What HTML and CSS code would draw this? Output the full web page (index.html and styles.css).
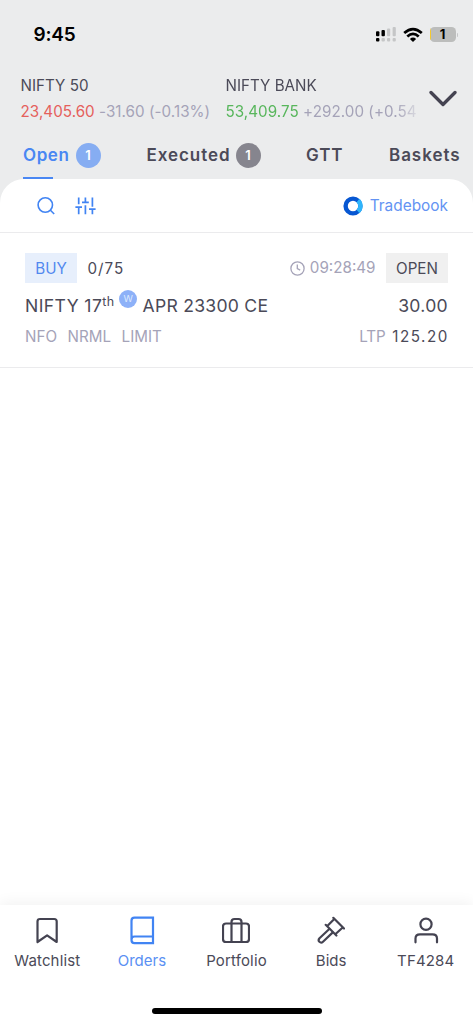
FILE: index.html
```html
<!DOCTYPE html>
<html lang="en">
<head>
<meta charset="utf-8">
<title>Orders</title>
<link rel="stylesheet" href="styles.css">
</head>
<body>
<div class="app">
  <header class="status">
    <span class="time">9:45</span>
    <div class="indicators">
      <svg class="signal" width="22" height="16" viewBox="0 0 22 16">
        <g fill="#000"><rect x="1" y="4.3" width="3.4" height="5" rx="1"/><rect x="6.5" y="3" width="3.4" height="6.3" rx="1"/><rect x="1" y="11" width="3.4" height="3.6" rx="1"/></g>
        <g fill="#c5c6c7"><rect x="12" y="1.5" width="3.2" height="7.8" rx="1"/><rect x="17.6" y="0" width="3.2" height="9.3" rx="1"/><rect x="6.5" y="11" width="3.4" height="3.4" rx="1"/><rect x="12" y="11" width="3.2" height="3.4" rx="1"/><rect x="17.6" y="11" width="3.2" height="3.4" rx="1"/></g>
      </svg>
      <svg class="wifi" width="20" height="16" viewBox="0 0 20 16">
        <g fill="none" stroke="#000" stroke-width="2.7"><path d="M1.200 6Q10-1.800 18.800 6"/><path d="M4.300 9.600Q10 4.300 15.700 9.600"/></g>
        <path d="M6.900 12Q10 9.200 13.100 12L10 15Z"/>
      </svg>
      <div class="battery"><span class="charge"></span>1</div>
      <span class="battery-cap"></span>
    </div>
  </header>

  <section class="tickers">
    <div class="ticker">
      <div class="index-name">NIFTY 50</div>
      <div class="quote"><span class="down">23,405.60</span> <span class="change">-31.60 (-0.13%)</span></div>
    </div>
    <div class="ticker ticker-clipped">
      <div class="index-name">NIFTY BANK</div>
      <div class="quote"><span class="up">53,409.75</span> <span class="change">+292.00 (+0.54</span></div>
    </div>
    <svg class="chevron" width="28" height="18" viewBox="0 0 28 18"><path d="M2 2.5 14 14.5 26 2.5" fill="none" stroke="#444351" stroke-width="3.3" stroke-linecap="round" stroke-linejoin="round"/></svg>
  </section>

  <nav class="tabs">
    <div class="tab tab-active"><span>Open</span><span class="count count-blue">1</span></div>
    <div class="tab tab-executed"><span>Executed</span><span class="count">1</span></div>
    <div class="tab tab-gtt">GTT</div>
    <div class="tab">Baskets</div>
  </nav>

  <main class="sheet">
    <div class="toolbar">
      <svg class="search" width="18" height="18" viewBox="0 0 18 18" fill="none" stroke="#4184f3" stroke-width="1.6"><circle cx="8.3" cy="8" r="7.200"/><path d="m13.200 13 4 4"/></svg>
      <svg class="sliders" width="21" height="18" viewBox="0 0 21 18" fill="none" stroke="#4184f3" stroke-width="1.7"><path d="M3.700.5v6.800M3.700 10v7.300M.4 10.200h6.600M10.400.5v5M10.400 8.300v9M7 5.300h6.800M17.400.5v9.200M17.400 12.200v5.100M14 12.100h6.600"/></svg>
      <div class="tradebook">
        <svg width="20" height="20" viewBox="0 0 20 20" fill="none" stroke-width="4.4"><circle cx="10" cy="10" r="7.4" stroke="#0757d2"/><path d="M15 4.500A7.400 7.400 0 0 1 15 15.500" stroke="#2fb5fb"/></svg>
        <span>Tradebook</span>
      </div>
    </div>

    <article class="order">
      <div class="order-top">
        <span class="tag buy">BUY</span><span class="qty">0/75</span>
        <svg class="clock" width="15" height="15" viewBox="0 0 15 15" fill="none" stroke="#a5a3b8" stroke-width="1.3"><circle cx="7.5" cy="7.5" r="6.6"/><path d="M7.3 3.5v4.2l2.9 1.5"/></svg>
        <span class="order-time">09:28:49</span><span class="tag open">OPEN</span>
      </div>
      <div class="order-mid">
        <span class="inst">NIFTY 17</span><span class="th">th</span><span class="weekly">W</span><span class="strike">APR 23300 CE</span>
        <span class="price">30.00</span>
      </div>
      <div class="order-bottom">
        <span>NFO</span><span class="nrml">NRML</span><span class="limit">LIMIT</span>
        <span class="ltp">LTP</span><span class="ltp-value">125.20</span>
      </div>
    </article>
  </main>

  <nav class="bottom">
    <div class="item">
      <svg width="28" height="30" viewBox="0 0 28 30"><path d="M4.500 27V6.500Q4.500 4 7 4h14.200Q23.700 4 23.700 6.500V27L14.100 20.300Z"/></svg>
      <span class="wide">Watchlist</span>
    </div>
    <div class="item active">
      <svg width="28" height="30" viewBox="0 0 28 30"><path d="M25 2.700H6.500Q3.500 2.700 3.500 5.700V25Q3.500 28.200 6.500 28.200H25ZM3.500 24.700Q3.500 21.500 6.500 21.500H25"/></svg>
      <span>Orders</span>
    </div>
    <div class="item">
      <svg width="28" height="30" viewBox="0 0 28 30"><rect x="1" y="8.500" width="26" height="18.500" rx="3"/><path d="M9.500 27V7Q9.500 4 12.500 4h4q3 0 3 3v20"/></svg>
      <span class="wide">Portfolio</span>
    </div>
    <div class="item">
      <svg width="28" height="30" viewBox="0 0 28 30"><path d="M16.300 2.800 27 13.500M8.700 9.800 19.400 20.500M17.300 3.900 10.300 11.100M25.700 12.500 18.300 19.200"/><path d="M12.300 14 2.500 23.200Q.8 25.200 2.400 26.800 4.200 28.400 6 26.700L15.800 17.400"/></svg>
      <span>Bids</span>
    </div>
    <div class="item">
      <svg width="28" height="30" viewBox="0 0 28 30"><circle cx="14" cy="9.300" r="5.600"/><path d="M3.500 27.300V23.500Q3.500 19.300 8 19.300H20.500Q25 19.300 25 23.500v3.800"/></svg>
      <span class="wide">TF4284</span>
    </div>
  </nav>
  <div class="home"></div>
</div>
</body>
</html>
```
FILE: styles.css
```css
* { box-sizing: border-box; }
body { margin: 0; background: #fff; }
.app {
  width: 473px; height: 1024px; overflow: hidden;
  display: flex; flex-direction: column;
  background: #ebeced;
  font-family: Inter, "Liberation Sans", sans-serif;
  color: #4b4a58; white-space: nowrap;
}
.status { height: 74px; flex: none; padding: 20px 15px 0 33.500px; display: flex; justify-content: space-between; align-items: flex-start; }
.time { font-size: 19px; line-height: 30px; font-weight: 600; color: #000; letter-spacing: -.2px; }
.indicators { display: flex; align-items: center; height: 29px; }
.wifi { margin-left: 6px; }
.battery { position: relative; width: 26px; height: 15px; margin-left: 6.500px; border-radius: 4.500px; background: #bcbdbc; overflow: hidden; color: #000; font-size: 13px; line-height: 15px; font-weight: 700; text-align: center; }
.charge { position: absolute; left: 0; top: 0; width: 1.500px; height: 15px; background: #f5ca2e; }
.battery-cap { width: 1.500px; height: 4px; margin-left: 1px; border-radius: 0 2px 2px 0; background: #c5c6c7; }

.tickers { height: 56px; flex: none; display: flex; padding-left: 20.500px; font-size: 15.200px; }
.ticker { width: 205px; flex: none; }
.ticker-clipped { width: 193px; -webkit-mask-image: linear-gradient(90deg, #000 170px, transparent 198px); mask-image: linear-gradient(90deg, #000 170px, transparent 198px); }
.index-name { line-height: 24px; }
.quote { line-height: 27px; letter-spacing: .04px; }
.down { color: #e5605c; }
.up { color: #58b65c; }
.change { color: #a5a3b8; }
.chevron { margin: 16px 0 0 10.500px; }

.tabs { height: 49px; flex: none; display: flex; padding-left: 23px; font-size: 17px; font-weight: 600; letter-spacing: .95px; }
.tab { display: flex; align-items: center; height: 49px; padding-top: 2px; line-height: 47px; }
.tab-active { color: #4987f3; width: 123.500px; letter-spacing: .6px; background: linear-gradient(#4987f3, #4987f3) 0 100% / 30px 2.500px no-repeat; }
.tab-executed { width: 159.500px; }
.tab-gtt { width: 83px; }
.count { width: 25px; height: 25px; margin-left: 5px; border-radius: 50%; background: #86858e; color: #fff; font-size: 13px; line-height: 25px; letter-spacing: 0; text-align: center; }
.count-blue { margin-left: 6px; background: #86adf2; }

.sheet { flex: 1; background: #fff; border-radius: 24px 24px 0 0; }
.toolbar { height: 54px; display: flex; align-items: center; padding: 0 25px 0 36.500px; border-bottom: 1.500px solid #ebebed; }
.sliders { margin-left: 20.500px; }
.tradebook { display: flex; align-items: center; gap: 7px; margin-left: auto; color: #6393f3; font-size: 15.400px; }
.order { height: 135px; padding: 20px 25px 0; border-bottom: 1.500px solid #ebebed; }
.order-top, .order-mid, .order-bottom { display: flex; align-items: center; }
.order-top { height: 30px; font-size: 15.200px; }
.tag { height: 30px; line-height: 31px; text-align: center; }
.buy { width: 52px; color: #5288ef; background: #e7effc; }
.qty { margin-left: 10.500px; letter-spacing: 1px; }
.clock { margin-left: auto; }
.order-time { color: #a5a3b8; margin: -2px 10.500px 0 5px; }
.open { width: 62px; background: #f0f0f0; }
.order-mid { height: 44px; font-size: 17.600px; }
.inst { letter-spacing: .4px; }
.th { font-size: 12.500px; margin: -8px 4.500px 0 0; letter-spacing: .4px; }
.weekly { width: 18px; height: 18px; margin: -12px 5.500px 0 0; border-radius: 50%; color: #dce9ff; background: #8db1f8; font-size: 9.500px; line-height: 18px; text-align: center; }
.strike { letter-spacing: .25px; }
.price { margin-left: auto; letter-spacing: .3px; }
.order-bottom { height: 19px; font-size: 15.200px; color: #a5a3b8; }
.nrml, .limit { margin-left: 10.500px; }
.ltp { margin-left: auto; }
.ltp-value { margin: 0 -.8px 0 6.500px; color: #4b4a58; letter-spacing: 1.500px; }

.bottom { height: 88px; flex: none; display: grid; grid-template-columns: repeat(5, 1fr); padding-top: 10px; background: #fff; box-shadow: 0 -2px 14px rgba(0, 0, 0, .06); font-size: 15px; }
.item { display: flex; flex-direction: column; align-items: center; }
.item svg { fill: none; stroke: #444351; stroke-width: 2.200; stroke-linejoin: round; stroke-linecap: round; }
.item.active { color: #5a90f3; }
.item.active svg { stroke: #4184f3; stroke-linejoin: miter; }
.item span { line-height: 31px; }
.item .wide { letter-spacing: .15px; }
.home { flex: none; height: 31px; background: #fff; display: flex; justify-content: center; padding-top: 14.500px; }
.home::before { content: ""; width: 170px; height: 6.500px; border-radius: 4px; background: #000; }
```
